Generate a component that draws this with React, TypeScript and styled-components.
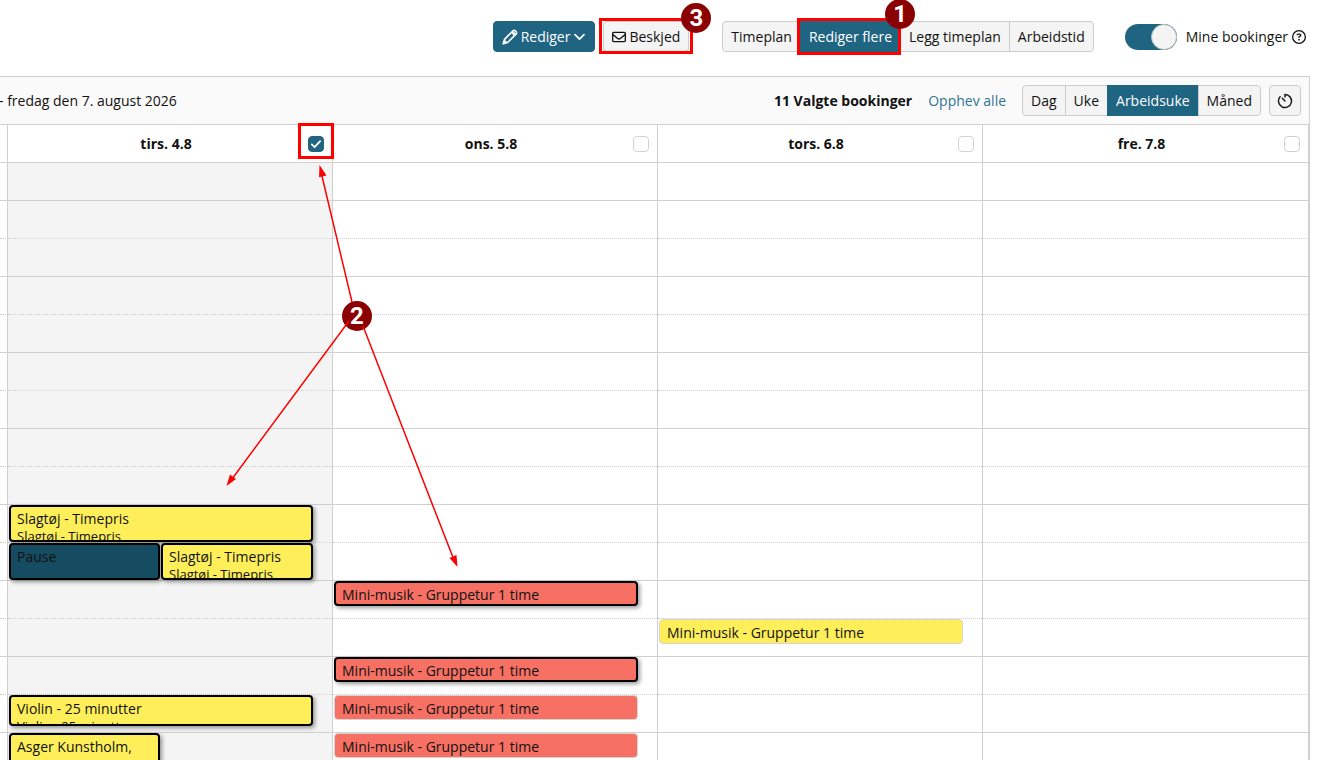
import React from 'react';
import styled, { createGlobalStyle, css } from 'styled-components';
import { FaRegEnvelope, FaRegCircleQuestion } from 'react-icons/fa6';

const color = {
  primary: '#1f6582',
  line: '#d0d0d0',
  text: '#111',
  button: '#f4f4f4',
  mark: '#fe0000',
  badge: '#8b0000',
};

const GlobalStyle = createGlobalStyle`
  *, *::before, *::after { box-sizing: border-box; }
  body {
    margin: 0;
    background: #fff;
    color: ${color.text};
    font: 14px/20px 'Open Sans', 'Noto Sans', sans-serif;
  }
  button, input { font: inherit; color: inherit; margin: 0; }
`;

const Page = styled.div`
  position: relative;
  display: flex;
  flex-direction: column;
  height: 100vh;
  overflow: hidden;
`;

const TopBar = styled.header`
  display: flex;
  flex: none;
  align-items: center;
  justify-content: flex-end;
  height: 76px;
  padding: 0 26px 3px 0;
`;

const Marked = styled.div`
  position: relative;
  display: flex;
`;

const Highlight = styled.span<{ $inset: string }>`
  position: absolute;
  inset: ${(p) => p.$inset};
  z-index: 2;
  border: 3px solid ${color.mark};
  pointer-events: none;
`;

const Badge = styled.span`
  position: absolute;
  z-index: 3;
  display: grid;
  place-items: center;
  width: 30px;
  height: 30px;
  border-radius: 50%;
  background: ${color.badge};
  color: #fff;
  font: bold 24px/30px Roboto, sans-serif;
`;

const CornerBadge = styled(Badge)<{ $top: number; $right: number }>`
  top: ${(p) => p.$top}px;
  right: ${(p) => p.$right}px;
`;

const Button = styled.button<{ $primary?: boolean }>`
  display: flex;
  align-items: center;
  gap: 3px;
  height: 31px;
  padding: 0 8px;
  border: 1px solid ${(p) => (p.$primary ? color.primary : '#ccc')};
  border-radius: 4px;
  background: ${(p) => (p.$primary ? color.primary : color.button)};
  color: ${(p) => (p.$primary ? '#fff' : color.text)};
  white-space: nowrap;
`;

const IconButton = styled(Button)`
  justify-content: center;
  width: 32px;
  padding: 0;
`;

const Actions = styled.div`
  display: flex;
  gap: 8px;
  margin-right: 33px;
`;

const Group = styled.div`
  display: flex;

  ${Button} {
    border-radius: 0;
  }
  > * + * {
    margin-left: -1px;
  }
  > :first-child {
    border-radius: 4px 0 0 4px;
  }
  > :last-child {
    border-radius: 0 4px 4px 0;
  }
`;

const SwitchLabel = styled.label`
  display: flex;
  align-items: center;
  gap: 9px;
  margin-left: 31px;
`;

const Switch = styled.input`
  appearance: none;
  display: flex;
  justify-content: flex-end;
  width: 52px;
  height: 26px;
  border-radius: 13px;
  background: ${color.primary};

  &::before {
    content: '';
    width: 26px;
    height: 26px;
    border: 1px solid #b4bcc2;
    border-radius: 50%;
    background: ${color.button};
  }
`;

const SwitchText = styled.span`
  display: flex;
  align-items: center;
  gap: 4px;
`;

const Calendar = styled.main`
  display: flex;
  flex: 1;
  flex-direction: column;
  min-height: 0;
  margin-right: 22px;
  border: solid ${color.line};
  border-width: 1px 1px 0 0;
`;

const Toolbar = styled.div`
  display: flex;
  flex: none;
  align-items: center;
  gap: 16px;
  height: 48px;
  padding-right: 8px;
  border-bottom: 1px solid ${color.line};
  background: #fafafa;
`;

const Range = styled.span`
  flex: 1;
  margin-left: -1px;
`;

const Link = styled.a`
  color: #2f7391;
  text-decoration: none;
`;

const ToolbarButtons = styled.div`
  display: flex;
  gap: 8px;
`;

const Week = styled.div`
  display: grid;
  flex: 1;
  grid-template-columns: 8px repeat(4, minmax(0, 1fr));
  grid-template-rows: 38px 1fr;
  min-height: 0;
  border-right: 1px solid ${color.line};
`;

const DayHead = styled.div<{ $last?: boolean }>`
  display: grid;
  align-items: center;
  padding-right: 8px;
  border: solid ${color.line};
  border-width: 0 ${(p) => (p.$last ? 0 : 1)}px 1px 0;

  > * {
    grid-area: 1 / 1;
  }
`;

const HeadSpacer = styled.div`
  border: solid ${color.line};
  border-width: 0 1px 1px 0;
`;

const DayTitle = styled.label`
  justify-self: center;
  font-weight: 700;
`;

const CheckArea = styled.div`
  position: relative;
  display: grid;
  justify-self: end;
  margin-top: 1px;
`;

const Check = styled.input`
  appearance: none;
  grid-area: 1 / 1;
  width: 16px;
  height: 16px;
  border: 1px solid #d2d2d2;
  border-radius: 4px;
  background: #fff;

  &:checked {
    border-color: ${color.primary};
    background: ${color.primary};
  }
`;

const Tick = styled.svg`
  grid-area: 1 / 1;
  z-index: 1;
  pointer-events: none;
`;

const Day = styled.div<{ $shaded?: boolean; $last?: boolean }>`
  display: grid;
  grid-template-columns: 1fr 1fr 20px;
  grid-auto-rows: 38px;
  border-right: ${(p) => (p.$last ? 0 : 1)}px solid ${color.line};
  background: ${(p) => (p.$shaded ? '#f4f4f4' : '#fff')};
`;

const Slot = styled.div<{ $row: number }>`
  grid-row: ${(p) => p.$row};
  grid-column: 1 / -1;
  border-bottom: 1px ${(p) => (p.$row % 2 ? 'solid' : 'dotted')} ${color.line};
`;

type Half = 'left' | 'right' | 'full';
const columns: Record<Half, string> = { left: '1 / 2', right: '2 / 3', full: '1 / 3' };

const EventBox = styled.article<{
  $row: number;
  $half: Half;
  $height: number;
  $fill: string;
  $selected?: boolean;
}>`
  z-index: 1;
  grid-row: ${(p) => p.$row};
  grid-column: ${(p) => columns[p.$half]};
  height: ${(p) => p.$height}px;
  margin-left: 1px;
  margin-right: ${(p) => (p.$half === 'left' ? 0 : -1)}px;
  overflow: hidden;
  border-radius: 4px;
  background: ${(p) => p.$fill};
  white-space: nowrap;
  ${(p) =>
    p.$selected
      ? css`
          padding: 2px 6px;
          border: 2px solid #000;
          box-shadow: 2px 2px 4px rgba(0, 0, 0, 0.4);
        `
      : css`
          padding: 3px 7px;
          border: 1px solid #d4d4d4;
        `}
`;

const EventTitle = styled.div`
  line-height: 19px;
`;

const EventNote = styled.div`
  font-size: 13px;
  line-height: 16px;
`;

const Pointers = styled.div`
  position: absolute;
  top: 160px;
  left: 220px;
  z-index: 2;
  pointer-events: none;

  svg {
    display: block;
    position: relative;
    z-index: 4;
  }
`;

const PointerBadge = styled(Badge)`
  top: 141px;
  left: 122px;
`;

const yellow = '#feef5a';
const red = '#f77064';
const navy = '#154c62';

type Booking = {
  row: number;
  half?: Half;
  height: number;
  fill: string;
  selected?: boolean;
  title: string;
  note?: string;
};

const group = 'Mini-musik - Gruppetur 1 time';

const days: { id: string; title: string; checked?: boolean; bookings: Booking[] }[] = [
  {
    id: 'tirs',
    title: 'tirs. 4.8',
    checked: true,
    bookings: [
      { row: 10, height: 37, fill: yellow, selected: true, title: 'Slagtøj - Timepris', note: 'Slagtøj - Timepris' },
      { row: 11, half: 'left', height: 37, fill: navy, selected: true, title: 'Pause' },
      { row: 11, half: 'right', height: 37, fill: yellow, selected: true, title: 'Slagtøj - Timepris', note: 'Slagtøj - Timepris' },
      { row: 15, height: 31, fill: yellow, selected: true, title: 'Violin - 25 minutter', note: 'Violin - 25 minutter' },
      { row: 16, half: 'left', height: 37, fill: yellow, selected: true, title: 'Asger Kunstholm,' },
    ],
  },
  {
    id: 'ons',
    title: 'ons. 5.8',
    bookings: [
      { row: 12, height: 25, fill: red, selected: true, title: group },
      { row: 14, height: 25, fill: red, selected: true, title: group },
      { row: 15, height: 25, fill: red, title: group },
      { row: 16, height: 25, fill: red, title: group },
    ],
  },
  {
    id: 'tors',
    title: 'tors. 6.8',
    bookings: [{ row: 13, height: 25, fill: yellow, title: group }],
  },
  { id: 'fre', title: 'fre. 7.8', bookings: [] },
];

const slots = Array.from({ length: 16 }, (_, i) => i + 1);

const PenIcon = () => (
  <svg width="16" height="16" viewBox="0 0 16 16" fill="none" stroke="currentColor" strokeWidth="1.7" strokeLinejoin="round" aria-hidden="true">
    <path d="M1.2 14.8 2.5 10.4 10.8 2a1.9 1.9 0 0 1 2.7 0l.5.5a1.9 1.9 0 0 1 0 2.7L5.6 13.5Z" />
    <path d="m10.2 3 2.8 2.8" strokeWidth="3" />
    <path d="m1.4 14.6 1.5-3.2 1.7 1.7z" fill="currentColor" strokeWidth="1" />
  </svg>
);

const ChevronIcon = () => (
  <svg width="13" height="8" viewBox="0 0 13 8" fill="none" stroke="currentColor" strokeWidth="1.7" strokeLinecap="round" strokeLinejoin="round" aria-hidden="true">
    <path d="m2 1.7 4.5 4.5L11 1.7" />
  </svg>
);

const TimerIcon = () => (
  <svg width="16" height="16" viewBox="0 0 16 16" fill="none" stroke="currentColor" strokeWidth="1.4" strokeLinecap="round" aria-hidden="true">
    <path d="M8 4V1.5a6.5 6.5 0 1 1-4.9 2.2" />
    <path d="M5.3 5.3 8 8" />
  </svg>
);

export default function App() {
  return (
    <Page>
      <GlobalStyle />
      <TopBar>
        <Actions>
          <Button $primary type="button">
            <PenIcon />
            Rediger
            <ChevronIcon />
          </Button>
          <Marked>
            <Button type="button">
              <FaRegEnvelope size={14} aria-hidden="true" />
              Beskjed
            </Button>
            <Highlight $inset="-3px -4px -2px -4px" />
            <CornerBadge $top={-18} $right={-22}>3</CornerBadge>
          </Marked>
        </Actions>
        <Group>
          <Button type="button">Timeplan</Button>
          <Marked>
            <Button $primary type="button">Rediger flere</Button>
            <Highlight $inset="-3px 0 -3px -3px" />
            <CornerBadge $top={-22} $right={-14}>1</CornerBadge>
          </Marked>
          <Button type="button">Legg timeplan</Button>
          <Button type="button">Arbeidstid</Button>
        </Group>
        <SwitchLabel>
          <Switch type="checkbox" role="switch" defaultChecked />
          <SwitchText>
            Mine bookinger
            <FaRegCircleQuestion size={14} aria-hidden="true" />
          </SwitchText>
        </SwitchLabel>
      </TopBar>

      <Calendar>
        <Toolbar>
          <Range>- fredag den 7. august 2026</Range>
          <strong>11 Valgte bookinger</strong>
          <Link href="#opphev">Opphev alle</Link>
          <ToolbarButtons>
            <Group>
              <Button type="button">Dag</Button>
              <Button type="button">Uke</Button>
              <Button $primary type="button">Arbeidsuke</Button>
              <Button type="button">Måned</Button>
            </Group>
            <IconButton type="button" aria-label="Tid">
              <TimerIcon />
            </IconButton>
          </ToolbarButtons>
        </Toolbar>
        <Week>
          <HeadSpacer />
          {days.map((day, index) => (
            <DayHead key={day.id} $last={index === days.length - 1}>
              <DayTitle htmlFor={day.id}>{day.title}</DayTitle>
              <CheckArea>
                <Check id={day.id} type="checkbox" defaultChecked={day.checked} />
                {day.checked && (
                  <>
                    <Tick width="16" height="16" viewBox="0 0 16 16" fill="none" stroke="#fff" strokeWidth="1.8" strokeLinecap="round" strokeLinejoin="round">
                      <path d="m3.8 8.4 2.8 2.8 5.6-6" />
                    </Tick>
                    <Highlight $inset="-13px -10px -7px -10px" />
                  </>
                )}
              </CheckArea>
            </DayHead>
          ))}
          <Day>
            {slots.map((row) => (
              <Slot key={row} $row={row} />
            ))}
          </Day>
          {days.map((day, index) => (
            <Day key={day.id} $shaded={index === 0} $last={index === days.length - 1}>
              {slots.map((row) => (
                <Slot key={row} $row={row} />
              ))}
              {day.bookings.map((b, i) => (
                <EventBox key={i} $row={b.row} $half={b.half ?? 'full'} $height={b.height} $fill={b.fill} $selected={b.selected}>
                  <EventTitle>{b.title}</EventTitle>
                  {b.note && <EventNote>{b.note}</EventNote>}
                </EventBox>
              ))}
            </Day>
          ))}
        </Week>
      </Calendar>

      <Pointers>
        <PointerBadge>2</PointerBadge>
        <svg width="250" height="420" viewBox="220 160 250 420" fill={color.mark} stroke={color.mark} strokeWidth="1.5" aria-hidden="true">
          <path d="M352 302 321 172M349 321 232 479M363 326 454 560" />
          <path stroke="none" d="M319.5 165l7 10.5-7.5 1.7zM226.5 486l3.5-11.500 6 4.500zM457.5 567l-8-9 7-3z" />
        </svg>
      </Pointers>
    </Page>
  );
}
